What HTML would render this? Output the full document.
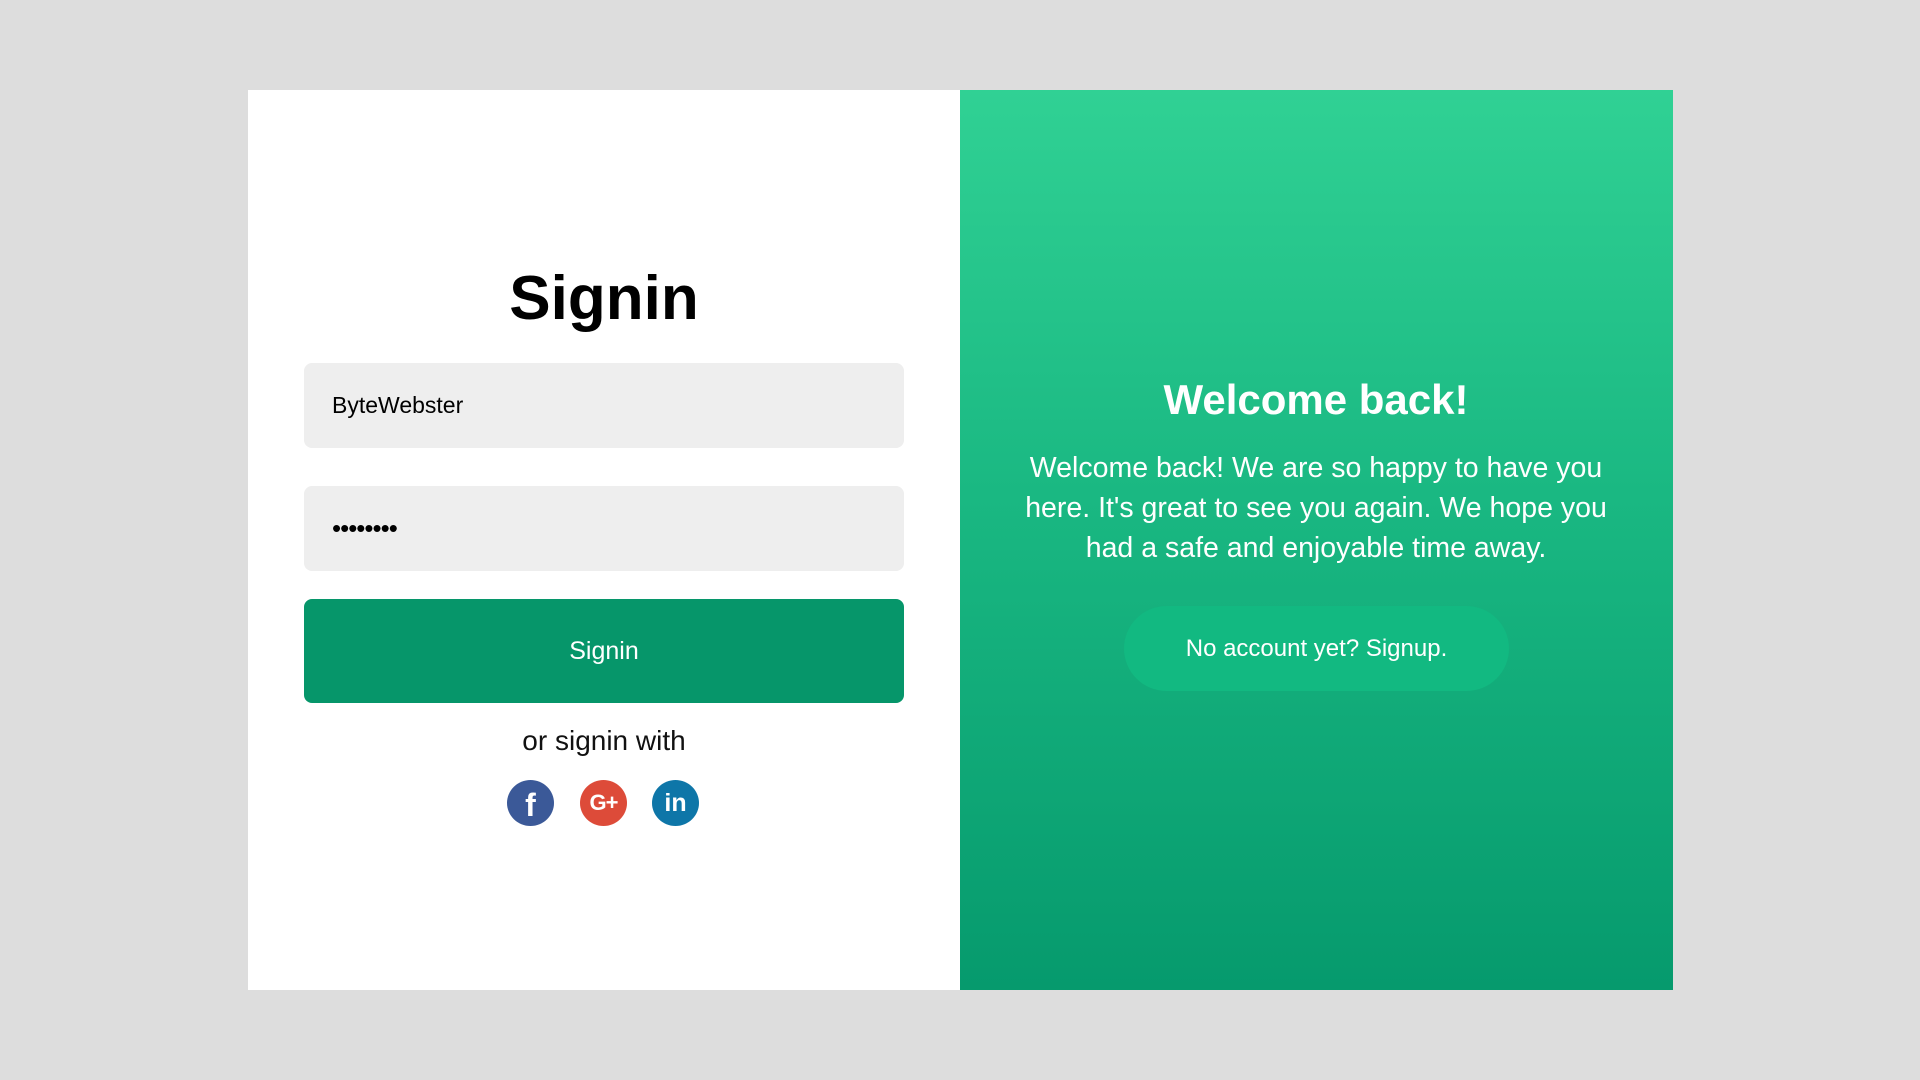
<!DOCTYPE html>
<html><head><style>
*{margin:0;padding:0;box-sizing:border-box}
body{width:1920px;height:1080px;background:#dddddd;position:relative;font-family:"Liberation Sans",sans-serif;overflow:hidden}
.card{position:absolute;left:248px;top:90px;width:1425px;height:900px;background:#fff}
.right{position:absolute;left:712px;top:0;width:713px;height:900px;background:linear-gradient(180deg,#30d194 0%,#1ab882 45%,#069a6d 100%);color:#fff;text-align:center}
.title{position:absolute;left:0;width:712px;top:166px;text-align:center;font-weight:bold;font-size:62px;line-height:86px;color:#000}
.inp{position:absolute;left:56px;width:600px;height:85px;background:#eeeeee;border-radius:8px;font-size:23px;padding-left:28px;line-height:85px;color:#000}
.btn{position:absolute;left:56px;top:509px;width:600px;height:104px;background:#06966a;border-radius:8px;color:#fff;font-size:25px;line-height:104px;text-align:center}
.or{position:absolute;left:0;width:712px;top:632px;text-align:center;font-size:28px;line-height:38px;color:#111}
.soc{position:absolute;top:690px;width:47px;height:46px;border-radius:50%;color:#fff;font-weight:bold;text-align:center;line-height:46px}
</style></head><body>
<div class="card">
<div class="title">Signin</div>
<div class="inp" style="top:273px">ByteWebster</div>
<div class="inp" style="top:396px;font-size:26px;letter-spacing:-1px">••••••••</div>
<div class="btn">Signin</div>
<div class="or">or signin with</div>
<div class="soc" style="left:259px;background:#3b5998;font-size:32px;line-height:50px">f</div>
<div class="soc" style="left:332px;background:#dd4b39;font-size:22px;letter-spacing:-1px">G+</div>
<div class="soc" style="left:404px;background:#0e76a8;font-size:25px">in</div>
<div class="right">
<div style="position:absolute;top:280px;left:0;width:712px;font-weight:bold;font-size:42px;line-height:60px">Welcome back!</div>
<div style="position:absolute;top:358px;left:0;width:712px;font-size:28.5px;line-height:40px">Welcome back! We are so happy to have you<br>here. It's great to see you again. We hope you<br>had a safe and enjoyable time away.</div>
<div style="position:absolute;top:516px;left:164px;width:385px;height:85px;border-radius:43px;background:#12b981;font-size:24px;line-height:85px">No account yet? Signup.</div>
</div>
</div>
</body></html>
